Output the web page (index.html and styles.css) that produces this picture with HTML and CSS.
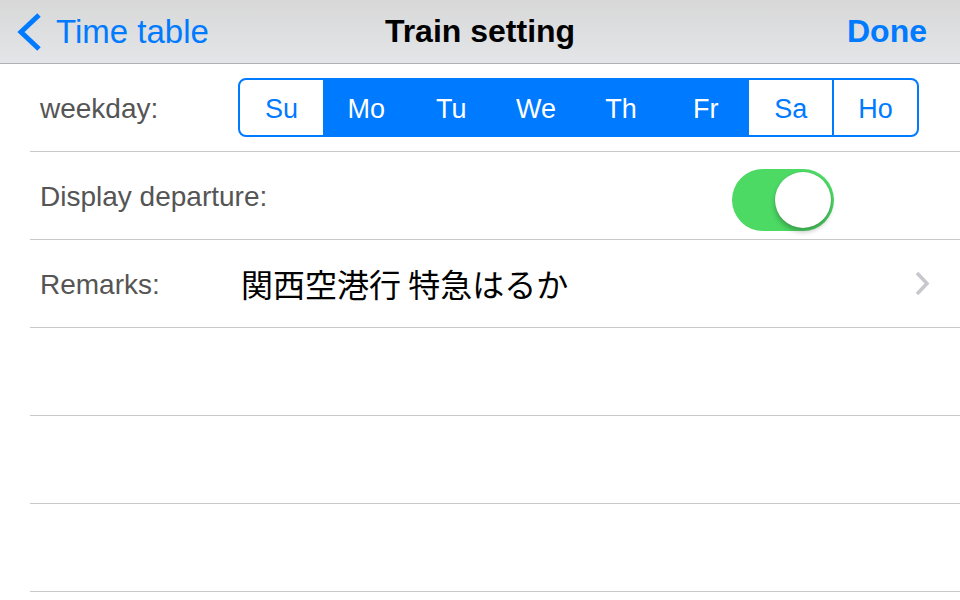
FILE: index.html
```html
<!DOCTYPE html>
<html>
  <head>
    <meta charset="utf-8">
    <title>Train setting</title>
    <link rel="stylesheet" href="styles.css">
  </head>
  <body>
    <div class="navbar">
      <a class="nav-back">
        <svg class="back-icon" width="26" height="40" viewBox="0 0 26 40">
          <polyline points="23,3 5,20 23,37" fill="none" stroke="#007aff" stroke-width="5" />
        </svg>
        <span>Time table</span>
      </a>
      <div class="nav-title">Train setting</div>
      <a class="nav-done">Done</a>
    </div>

    <ul class="setting-list">
      <li class="row">
        <span class="row-label">weekday:</span>
        <div class="segmented">
          <span class="segment">Su</span>
          <span class="segment selected">Mo</span>
          <span class="segment selected">Tu</span>
          <span class="segment selected">We</span>
          <span class="segment selected">Th</span>
          <span class="segment selected">Fr</span>
          <span class="segment">Sa</span>
          <span class="segment">Ho</span>
        </div>
      </li>
      <li class="row">
        <span class="row-label">Display departure:</span>
        <div class="toggle on">
          <span class="toggle-knob"></span>
        </div>
      </li>
      <li class="row">
        <span class="row-label">Remarks:</span>
        <span class="row-value">関西空港行 特急はるか</span>
        <svg class="disclosure" width="16" height="25" viewBox="0 0 16 25">
          <polyline points="3,2 13,12.5 3,23" fill="none" stroke="#c7c7cc" stroke-width="3.5" />
        </svg>
      </li>
      <li class="row"></li>
      <li class="row"></li>
      <li class="row"></li>
    </ul>
  </body>
</html>
```

FILE: styles.css
```css
body {
  margin: 0;
  background-color: #fff;
  font-family: "Liberation Sans", Arial, "Noto Sans CJK JP", sans-serif;
}
.navbar {
  height: 63px;
  border-bottom: 1px solid #b2b2b2;
  background: linear-gradient(#d8d8d8, #e3e5e8);
  display: grid;
  grid-template-columns: 1fr auto 1fr;
  align-items: center;
  font-size: 33px;
}
.nav-back {
  display: flex;
  align-items: center;
  gap: 14px;
  padding-left: 16px;
  color: #007aff;
}
.back-icon {
  display: block;
}
.nav-title {
  font-weight: bold;
  font-size: 32px;
  color: #000;
}
.nav-done {
  justify-self: end;
  padding-right: 33px;
  font-weight: bold;
  font-size: 32px;
  color: #007aff;
}
.setting-list {
  list-style: none;
  margin: 0;
  padding: 0;
}
.row {
  display: flex;
  align-items: center;
  height: 87px;
  margin-left: 30px;
  padding-left: 10px;
  border-bottom: 1px solid #c8c7cc;
}
.row-label {
  width: 198px;
  flex-shrink: 0;
  padding-top: 2px;
  white-space: nowrap;
  font-size: 28px;
  color: #555;
}
.row-value {
  font-family: "Noto Sans CJK JP", sans-serif;
  font-size: 32px;
  color: #000;
  margin-left: 3px;
  margin-bottom: 2px;
}
.disclosure {
  margin-left: auto;
  margin-right: 30px;
}
.segmented {
  display: flex;
  width: 681px;
  height: 59px;
  box-sizing: border-box;
  border: 2px solid #007aff;
  border-radius: 8px;
  overflow: hidden;
}
.segment {
  flex: 1;
  display: flex;
  align-items: center;
  justify-content: center;
  padding-top: 3px;
  font-size: 27px;
  color: #007aff;
  border-left: 2px solid #007aff;
}
.segment:first-child {
  border-left: none;
}
.segment.selected {
  background-color: #007aff;
  color: #fff;
}
.toggle {
  position: relative;
  width: 102px;
  height: 62px;
  margin-left: auto;
  margin-right: 126px;
  margin-top: 9px;
  border-radius: 31px;
  background-color: #e5e5ea;
}
.toggle.on {
  background-color: #4cd964;
}
.toggle-knob {
  position: absolute;
  top: 3px;
  right: 3px;
  width: 56px;
  height: 56px;
  border-radius: 50%;
  background-color: #fff;
  box-shadow: 0 4px 5px rgba(0, 0, 0, 0.25), 0 0 1px rgba(0, 0, 0, 0.2);
}
```
